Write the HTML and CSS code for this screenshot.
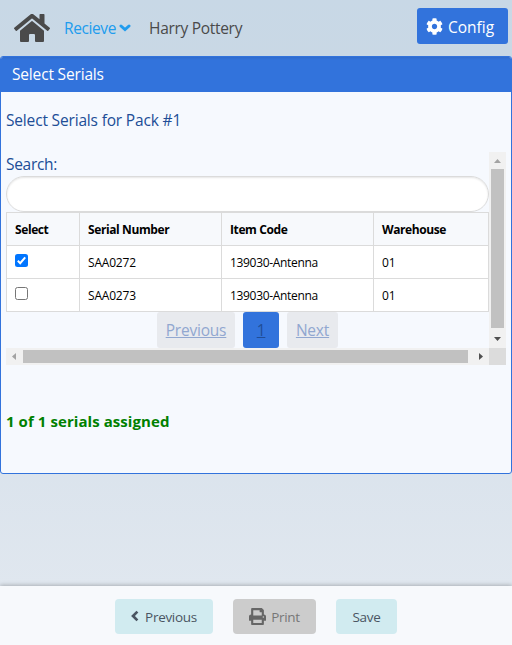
FILE: index.html
```html
<!DOCTYPE html>
<html lang="en">
<head>
<meta charset="utf-8">
<title>Select Serials</title>
<link rel="stylesheet" href="styles.css">
</head>
<body>
<header class="navbar">
  <svg class="home" viewBox="0 0 576 512"><path d="M280.37 148.26L96 300.11V464a16 16 0 0 0 16 16l112.06-.29a16 16 0 0 0 15.92-16V368a16 16 0 0 1 16-16h64a16 16 0 0 1 16 16v95.64a16 16 0 0 0 16 16.05L464 480a16 16 0 0 0 16-16V300L295.67 148.26a12.19 12.19 0 0 0-15.3 0zM571.6 251.47L488 182.56V44.05a12 12 0 0 0-12-12h-56a12 12 0 0 0-12 12v72.61L318.47 43a48 48 0 0 0-61 0L4.34 251.47a12 12 0 0 0-1.6 16.9l25.5 31A12 12 0 0 0 45.15 301l235.22-193.74a12.19 12.19 0 0 1 15.3 0L530.9 301a12 12 0 0 0 16.9-1.6l25.5-31a12 12 0 0 0-1.7-16.93z"/></svg>
  <a class="menu"><span class="menu-text">Recieve</span><svg class="caret" viewBox="0 0 12 8"><path d="M2 2 6 5.6l4-3.6"/></svg></a>
  <span class="user">Harry Pottery</span>
  <button class="config"><svg viewBox="0 0 512 512"><path d="M487.4 315.7l-42.6-24.6c4.3-23.2 4.3-47 0-70.2l42.6-24.6c4.9-2.8 7.1-8.6 5.5-14-11.1-35.6-30-67.8-54.7-94.6-3.8-4.1-10-5.1-14.8-2.3L380.8 110c-17.9-15.4-38.5-27.3-60.8-35.1V25.8c0-5.6-3.9-10.5-9.4-11.7-36.7-8.2-74.3-7.8-109.2 0-5.5 1.2-9.4 6.1-9.4 11.7V75c-22.2 7.9-42.8 19.8-60.8 35.1L88.7 85.5c-4.9-2.8-11-1.9-14.8 2.3-24.7 26.7-43.6 58.9-54.7 94.6-1.7 5.4.6 11.2 5.5 14L67.3 221c-4.3 23.2-4.3 47 0 70.2l-42.6 24.6c-4.9 2.8-7.1 8.6-5.5 14 11.1 35.6 30 67.8 54.7 94.6 3.8 4.1 10 5.1 14.8 2.3l42.6-24.6c17.9 15.4 38.5 27.3 60.8 35.1v49.2c0 5.6 3.9 10.5 9.4 11.7 36.7 8.2 74.3 7.8 109.2 0 5.5-1.2 9.4-6.1 9.4-11.7v-49.2c22.2-7.9 42.8-19.8 60.8-35.1l42.6 24.6c4.9 2.8 11 1.9 14.8-2.3 24.7-26.7 43.6-58.9 54.7-94.6 1.5-5.5-.7-11.3-5.6-14.1zM256 336c-44.1 0-80-35.9-80-80s35.9-80 80-80 80 35.9 80 80-35.9 80-80 80z"/></svg><span>Config</span></button>
</header>
<main class="panel">
  <h1 class="panel-title"><span>Select Serials</span></h1>
  <div class="panel-body">
    <p class="pack"><span>Select Serials for Pack #1</span></p>
    <div class="scroller">
      <div class="content">
        <label class="search-label" for="q"><span>Search:</span></label>
        <input class="search" id="q" type="text">
        <table class="serials">
          <colgroup><col class="c1"><col class="c2"><col class="c3"><col class="c4"></colgroup>
          <tr><th><span>Select</span></th><th><span>Serial Number</span></th><th><span>Item Code</span></th><th><span>Warehouse</span></th></tr>
          <tr><td><span class="check on"><svg viewBox="0 0 13 13"><path d="M2.8 6.8 5.2 9.2 10.2 3.4"/></svg></span></td><td><span>SAA0272</span></td><td><span class="item">139030-Antenna</span></td><td><span>01</span></td></tr>
          <tr><td><span class="check"></span></td><td><span>SAA0273</span></td><td><span class="item">139030-Antenna</span></td><td><span>01</span></td></tr>
        </table>
        <nav class="pages"><a class="page prev"><span>Previous</span></a><a class="page current"><span>1</span></a><a class="page next"><span>Next</span></a></nav>
      </div>
      <div class="vbar"><i class="up"></i><i class="vthumb"></i><i class="down"></i></div>
      <div class="hbar"><i class="left"></i><i class="hthumb"></i><i class="right"></i></div>
      <div class="corner"></div>
    </div>
    <p class="status"><span>1 of 1 serials assigned</span></p>
  </div>
</main>
<footer class="actions">
  <button class="btn back"><svg class="chev" viewBox="0 0 8 12"><path d="M6.4 1.6 2 6l4.4 4.4"/></svg><span>Previous</span></button>
  <button class="btn print"><svg class="printer" viewBox="0 0 512 512"><path d="M448 192V77.25c0-8.49-3.37-16.62-9.37-22.63L393.37 9.37c-6-6-14.14-9.37-22.63-9.37H96C78.33 0 64 14.33 64 32v160c-35.35 0-64 28.65-64 64v112c0 8.84 7.16 16 16 16h48v96c0 17.67 14.33 32 32 32h320c17.67 0 32-14.33 32-32v-96h48c8.84 0 16-7.16 16-16V256c0-35.35-28.65-64-64-64zm-64 256H128v-96h256v96zm0-224H128V64h192v48c0 8.84 7.16 16 16 16h48v96zm48 72c-13.25 0-24-10.75-24-24 0-13.26 10.75-24 24-24s24 10.74 24 24c0 13.25-10.75 24-24 24z"/></svg><span>Print</span></button>
  <button class="btn save"><span>Save</span></button>
</footer>
</body>
</html>
```
FILE: styles.css
```css
* { box-sizing: border-box; }
body {
  margin: 0;
  height: 645px;
  overflow: hidden;
  display: flex;
  flex-direction: column;
  font: 15.5px/24px "Open Sans", "Noto Sans", sans-serif;
  background: linear-gradient(#c8d8e6 0, #c9d8e5 56px, #e0e7ef 586px);
}
button { font: inherit; border: 0; padding: 0; display: flex; align-items: center; }
span { white-space: nowrap; }

.navbar { height: 56px; flex: none; display: flex; align-items: center; padding: 0 4px 0 14px; color: #4a4a4a; }
.home { width: 36px; height: 32px; fill: #4a4a4a; margin-right: 14px; }
.menu { display: flex; align-items: center; width: 85px; color: #209cee; }
.menu-text { width: 55px; letter-spacing: -0.4px; }
.caret { width: 12px; height: 8px; fill: none; stroke: #209cee; stroke-width: 3; stroke-linecap: round; }
.user { letter-spacing: -0.3px; }
.config { margin: -4px 0 0 auto; width: 91px; height: 36px; border-radius: 3px; background: #3273dc; color: #fff; padding-left: 9px; }
.config svg { width: 17px; height: 17px; fill: #fff; margin-right: 5px; }
.config span { letter-spacing: 0; padding-top: 1px; }

.panel { height: 418px; flex: none; border: 1px solid #3273dc; border-radius: 3px; background: #f6f9fe; overflow: hidden; }
.panel-title { margin: 0; height: 35px; padding-left: 11px; background: linear-gradient(#2f6bcc, #3273dc 3px); color: #fff; font-size: 15.5px; font-weight: 400; line-height: 35px; letter-spacing: -0.17px; }
.panel-body { padding: 16px 5px 0; }
.pack { margin: 0 0 20px; color: #204d96; letter-spacing: -0.17px; }

.scroller { width: 500px; height: 213px; display: grid; grid-template: 196px 17px / 483px 17px; }
.content { overflow: hidden; }
.search-label { display: block; height: 24px; color: #204d96; letter-spacing: -0.3px; }
.search { display: block; width: 483px; height: 36px; border: 1px solid #dbdbdb; border-radius: 18px; background: #fff; box-shadow: inset 0 1px 2px rgba(10,10,10,.1); }
.serials { width: 483px; height: 100px; table-layout: fixed; border-collapse: collapse; background: #fff; color: #000; font-size: 12px; line-height: 18px; }
.c1 { width: 73px; } .c2 { width: 142px; } .c3 { width: 152px; }
.serials th, .serials td { height: 33px; padding: 2px 8px 0; border: 1px solid #dbdbdb; text-align: left; vertical-align: middle; }
.serials th { background: #f7f9fc; font-weight: 700; }
.serials span { letter-spacing: -0.2px; }
.serials th span { letter-spacing: -0.4px; }
.serials .item { letter-spacing: -0.32px; }
.check { display: block; width: 13px; height: 13px; margin-top: -6px; border: 1px solid #767676; border-radius: 2.5px; background: #fff; }
.check.on { border: 0; background: #0075ff; }
.check svg { display: block; fill: none; stroke: #fff; stroke-width: 2; }
.pages { display: flex; justify-content: center; gap: 8px; }
.page { height: 36px; border-radius: 3px; display: flex; align-items: center; justify-content: center; background: #e8eaee; color: #91a7d0; text-decoration: underline; letter-spacing: -0.2px; }
.prev { width: 78px; } .next { width: 51px; }
.current { width: 36px; background: #3273dc; color: #204d96; }

.vbar, .hbar { background: #f1f1f1; display: flex; align-items: center; }
.vbar { flex-direction: column; }
.corner { background: #dcdcdc; }
.vthumb { width: 13px; height: 159px; background: #c1c1c1; }
.hthumb { width: 445px; height: 13px; background: #c1c1c1; }
.up, .down, .left, .right { width: 17px; height: 17px; flex: none; background: #a3a3a3; }
.up { clip-path: polygon(5px 11px, 8.5px 7px, 12px 11px); }
.down { margin-top: 2px; background: #505050; clip-path: polygon(5px 7px, 12px 7px, 8.5px 11px); }
.left { clip-path: polygon(10px 5px, 10px 12px, 6px 8.5px); }
.right { margin-left: 4px; background: #505050; clip-path: polygon(7px 5px, 7px 12px, 11px 8.5px); }
.status { margin: 44px 0 0; color: #008000; font-weight: 700; font-size: 15px; letter-spacing: 0.07px; }

.actions { margin-top: auto; height: 59px; flex: none; display: flex; justify-content: center; gap: 20px; padding-top: 13px; background: #f7f9fc; box-shadow: 0 -1px 4px rgba(10,10,10,.25); }
.btn { height: 35px; border-radius: 4px; justify-content: center; background: #d1ebf0; color: #4a5562; font-size: 13.5px; letter-spacing: -0.3px; }
.back { width: 98px; } .save { width: 61px; }
.print { width: 83px; background: #ccc; color: #777; }
.chev { width: 8px; height: 12px; margin: -1px 6px 0 0; fill: none; stroke: #4a5562; stroke-width: 2.7; }
.printer { width: 17px; height: 17px; fill: #666; margin: -1px 5px 0 0; }
```
